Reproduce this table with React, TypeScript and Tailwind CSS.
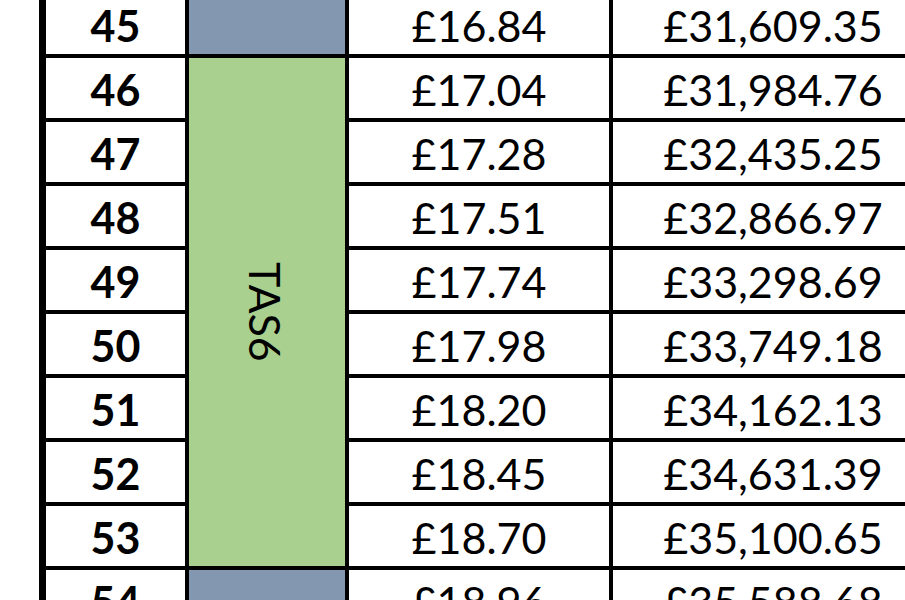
import React from "react";

const rows = [
    { n: 45, rate: "£16.84", year: "£31,609.35" },
    { n: 46, rate: "£17.04", year: "£31,984.76" },
    { n: 47, rate: "£17.28", year: "£32,435.25" },
    { n: 48, rate: "£17.51", year: "£32,866.97" },
    { n: 49, rate: "£17.74", year: "£33,298.69" },
    { n: 50, rate: "£17.98", year: "£33,749.18" },
    { n: 51, rate: "£18.20", year: "£34,162.13" },
    { n: 52, rate: "£18.45", year: "£34,631.39" },
    { n: 53, rate: "£18.70", year: "£35,100.65" },
    { n: 54, rate: "£18.96", year: "£35,588.68" },
]

export default function App() {
    return (
        <div className="w-[905px] h-[600px] overflow-hidden bg-white text-black" style={{ fontFamily: "Lato, 'Open Sans', sans-serif" }}>
            <div className="ml-[39px] -mt-[10px] pt-[4px] grid grid-cols-[139px_156px_260px_320px] auto-rows-[60px] gap-[4px] bg-black border-l-[7px] border-black w-max">
                {rows.map((r) => (
                    <React.Fragment key={r.n}>
                        <div className="col-start-1 bg-white flex items-center justify-center text-[43px] font-bold leading-none pt-[2px]">
                            {r.n}
                        </div>
                        {r.n === 45 || r.n === 54 ? (
                            <div className="col-start-2 bg-[#8497B0]"></div>
                        ) : r.n === 46 ? (
                            <div className="col-start-2 row-span-8 bg-[#A9D08E] flex items-center justify-center">
                                <span className="[writing-mode:vertical-rl] text-[43px] leading-none pr-[4px]">TAS6</span>
                            </div>
                        ) : null}
                        <div className="col-start-3 bg-white flex items-center justify-center text-[43px] leading-none pt-[2px]">
                            {r.rate}
                        </div>
                        <div className="col-start-4 bg-white flex items-center justify-center text-[43px] leading-none pt-[2px]">
                            {r.year}
                        </div>
                    </React.Fragment>
                ))}
            </div>
        </div>
    )
}
